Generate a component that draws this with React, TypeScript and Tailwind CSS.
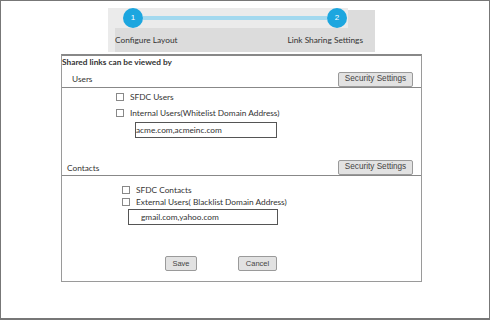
import React from 'react';

const label = "font-['Lato','Liberation_Sans',sans-serif] text-[8.3px] leading-[12px] text-[#333] whitespace-nowrap";
const btn =
  "flex items-center justify-center bg-[#e2e2e2] border border-[#9a9a9a] rounded-[2px] font-['Liberation_Sans',sans-serif] text-[#444] leading-none whitespace-nowrap";

const Check = ({ text }: { text: string }) => (
  <div className="flex items-center gap-[6px] h-[8px]">
    <div className="w-[8px] h-[8px] border border-[#888] bg-white shrink-0" />
    <span className={label}>{text}</span>
  </div>
);

const Stepper = () => (
  <div className="ml-[107px] mt-[7px] w-[267px] h-[44px] flex flex-col">
    <div className="flex h-[20px]">
      <div className="w-[240px] bg-[#ebebeb] flex items-center pl-[15px]">
        <div className="w-[20px] h-[20px] rounded-full bg-[#1ca6df] text-white text-[8px] flex items-center justify-center font-['Liberation_Sans',sans-serif]">
          1
        </div>
        <div className="w-[184px] h-[4px] bg-[#a3d9ef]" />
        <div className="w-[20px] h-[20px] rounded-full bg-[#1ca6df] text-white text-[8px] flex items-center justify-center font-['Liberation_Sans',sans-serif]">
          2
        </div>
      </div>
      <div className="flex-1 mt-[2px] bg-[#dcdcdc]" />
    </div>
    <div className="flex h-[24px]">
      <div className="w-[7px] bg-[#ebebeb]" />
      <div className="flex-1 bg-[#dcdcdc] flex items-center justify-between pr-[12px]">
        <span className={label}>Configure Layout</span>
        <span className={label}>Link Sharing Settings</span>
      </div>
    </div>
  </div>
);

export default function App() {
  return (
    <div className="w-[490px] h-[320px] bg-white border border-[#777] border-b-2 overflow-hidden">
      <Stepper />
      <div className="ml-[60px] mt-[2px] w-[361px] h-[228px] border border-[#9a9a9a] border-t-2 border-t-[#888] flex flex-col">
        <div className={label + ' font-bold text-[#222]'}>Shared links can be viewed by</div>

        {/* Users */}
        <div className="flex items-end justify-between h-[20px] border-b border-[#888]">
          <span className={label + ' pl-[10px] mb-[2px]'}>Users</span>
          <button className={btn + ' w-[75px] h-[15px] mr-[8px] text-[8.2px]'}>Security Settings</button>
        </div>
        <div className="pl-[54px] mt-[5px] flex flex-col gap-[8px]">
          <Check text="SFDC Users" />
          <Check text="Internal Users(Whitelist Domain Address)" />
        </div>
        <div className="ml-[73px] mt-[5px] w-[142px] h-[16px] border border-[#555] flex items-center">
          <span className={label + ' text-[#222]'}>acme.com,acmeinc.com</span>
        </div>

        {/* Contacts */}
        <div className="flex items-end justify-between h-[20px] mt-[18px] border-b border-[#888]">
          <span className={label + ' pl-[5px] mb-[1px]'}>Contacts</span>
          <button className={btn + ' w-[75px] h-[15px] mr-[8px] text-[8.2px]'}>Security Settings</button>
        </div>
        <div className="pl-[60px] mt-[10px] flex flex-col gap-[4px]">
          <Check text="SFDC Contacts" />
          <Check text="External Users( Blacklist Domain Address)" />
        </div>
        <div className="ml-[66px] mt-[3px] w-[150px] h-[16px] border border-[#555] flex items-center pl-[12px]">
          <span className={label + ' text-[#222]'}>gmail.com,yahoo.com</span>
        </div>

        <div className="flex ml-[103px] mt-[31px] gap-[41px]">
          <button className={btn + ' w-[32px] h-[15px] text-[7.5px]'}>Save</button>
          <button className={btn + ' w-[39px] h-[15px] text-[7.5px]'}>Cancel</button>
        </div>
      </div>
    </div>
  );
}
